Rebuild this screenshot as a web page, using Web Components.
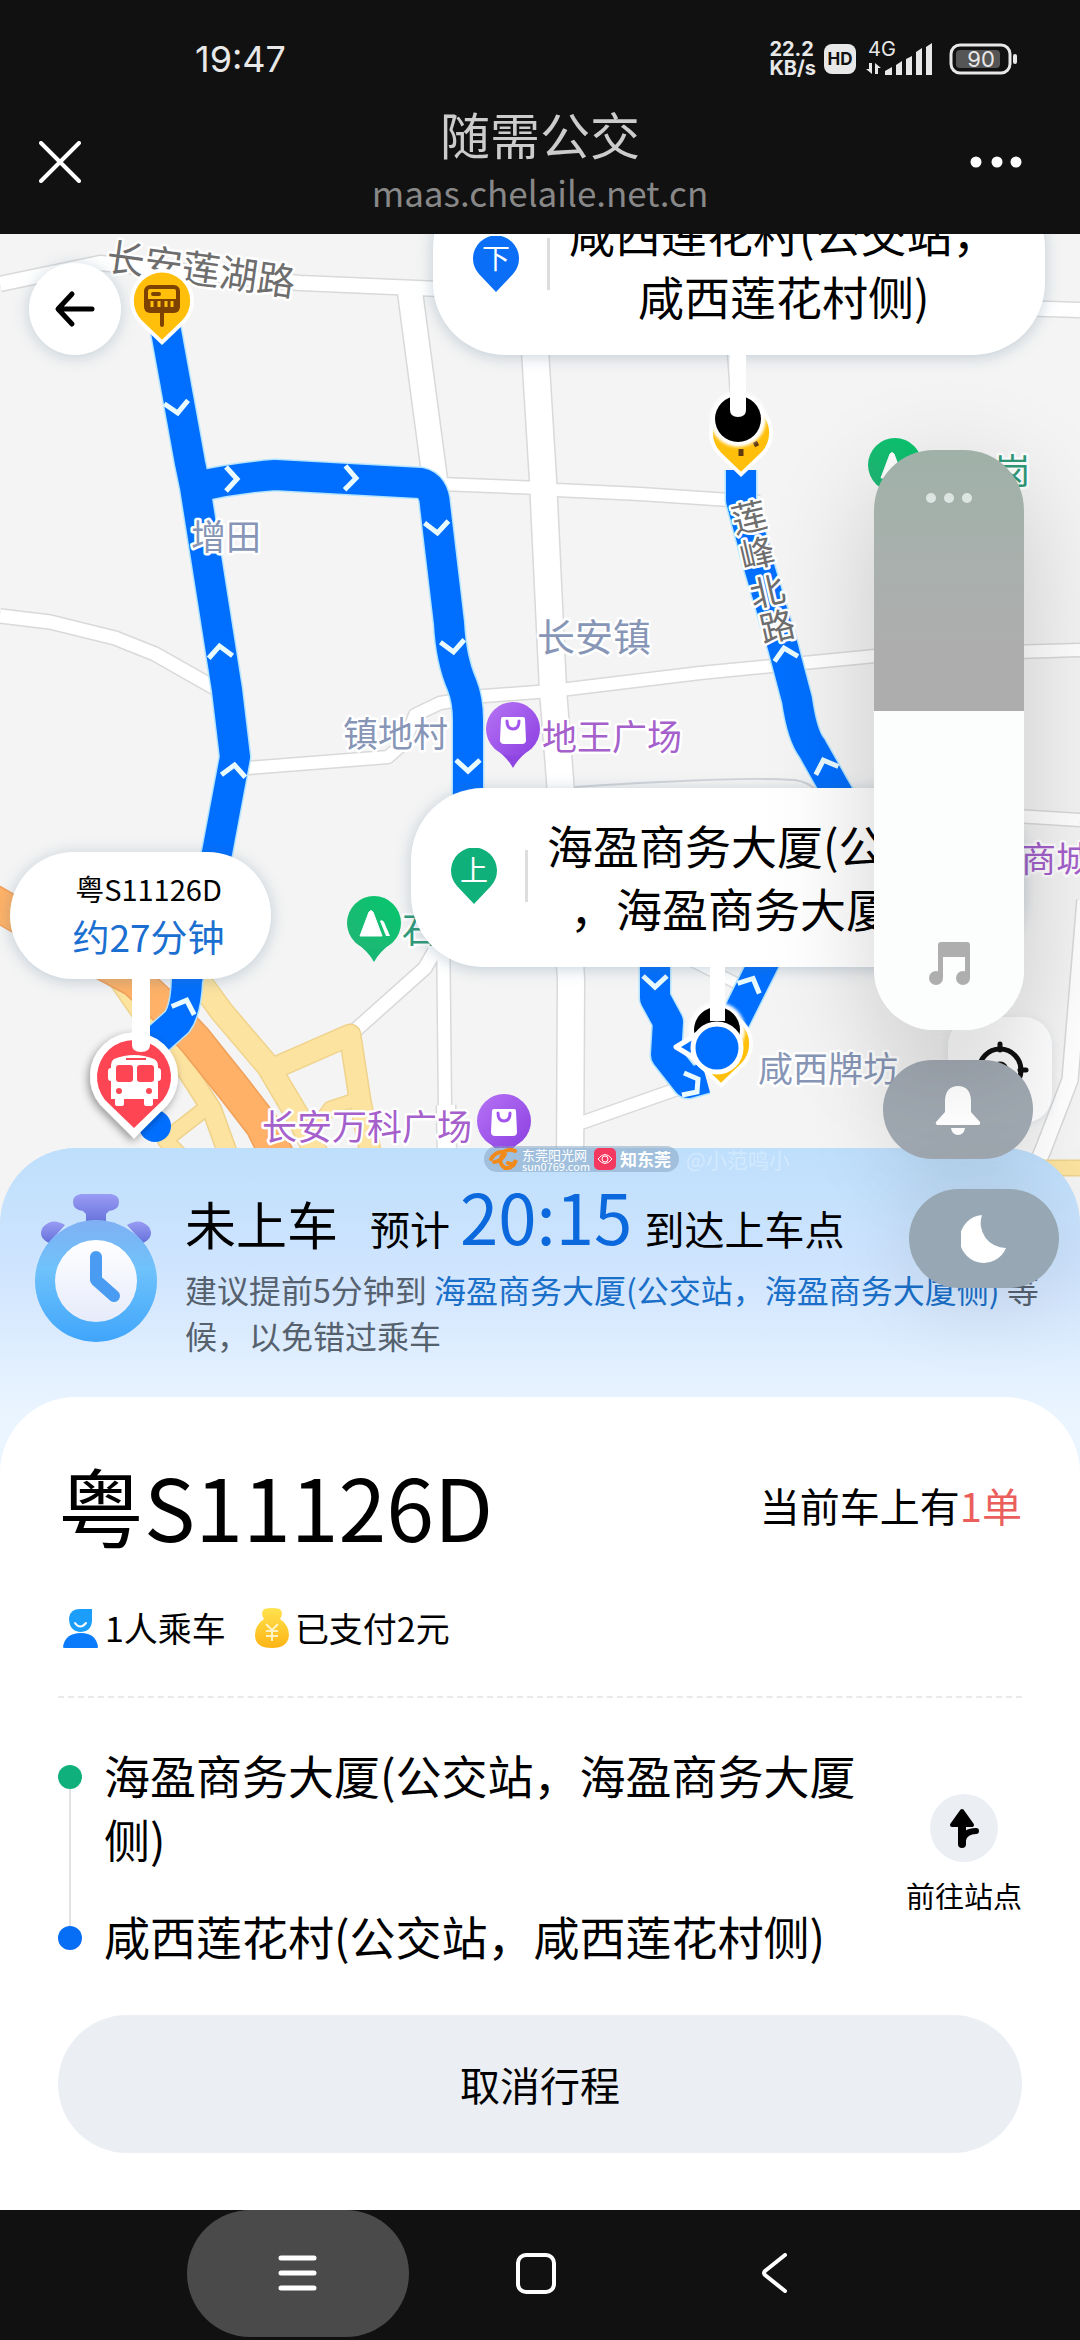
<!DOCTYPE html>
<html lang="zh-CN">
<head>
<meta charset="utf-8">
<meta name="viewport" content="width=device-width, initial-scale=1">
<title>随需公交</title>
<style>
  html, body { margin: 0; }
  body {
    position: relative;
    min-height: 100vh;
    display: flex;
    flex-direction: column;
    background: #111;
    color: #000;
    font-family: "Noto Sans CJK SC", "Noto Sans", sans-serif;
    overflow-x: hidden;
  }
  route-map { flex: 1; }
</style>
</head>
<body>
  <status-bar time="19:47" battery="90"></status-bar>
  <title-bar>
    <span slot="title">随需公交</span>
    <span slot="host">maas.chelaile.net.cn</span>
  </title-bar>
  <route-map>
    <stop-callout kind="off" style="left: 433px; top: -58px">咸西莲花村(公交站，<br>咸西莲花村侧)</stop-callout>
    <stop-callout kind="on" style="left: 411px; top: 554px">海盈商务大厦(公交站<br>，海盈商务大厦侧)</stop-callout>
    <bus-callout style="left: 10px; top: 618px">
      <span slot="plate">粤S11126D</span>
      <span slot="eta">约27分钟</span>
    </bus-callout>
  </route-map>
  <trip-sheet>
    <trip-status slot="status"></trip-status>
    <trip-detail slot="detail" plate="粤S11126D"></trip-detail>
  </trip-sheet>
  <nav-bar></nav-bar>
  <volume-panel></volume-panel>

<script>
function attach(el, html) {
  el.attachShadow({ mode: "open" }).innerHTML = html;
}

const BUTTON_RESET = `
  button {
    margin: 0;
    padding: 0;
    border: 0;
    background: none;
    color: inherit;
    font: inherit;
    cursor: pointer;
  }
  svg { display: block; }
`;

class StatusBar extends HTMLElement {
  constructor() {
    super();
    attach(this, `
      <style>
        :host {
          display: flex;
          justify-content: space-between;
          align-items: center;
          height: 38px;
          padding: 40px 62px 0 195px;
          background: #111;
          color: #e8e8e8;
          font-family: Inter, "Noto Sans CJK SC", sans-serif;
        }
        .time { font-size: 36px; line-height: 38px; }
        .right { display: flex; align-items: center; gap: 8px; }
        .speed { font-size: 20px; line-height: 19px; font-weight: 700; }
        .hd {
          width: 32px;
          border-radius: 8px;
          background: #e8e8e8;
          color: #111;
          font-size: 17px;
          line-height: 30px;
          font-weight: 700;
          text-align: center;
        }
        svg { display: block; }
        .signal text { font-size: 20px; }
        .battery text { font-size: 22px; }
      </style>
      <span class="time">${this.getAttribute("time")}</span>
      <div class="right">
        <div class="speed">22.2<br>KB/s</div>
        <div class="hd">HD</div>
        <svg class="signal" width="76" height="38" fill="#e8e8e8">
          <text x="4" y="16">4G</text>
          <path d="M8 23v11l-6-5h3v-6zM11 34V23l6 5h-3v6z"/>
          <path d="M21 35v-4l7-4v8zM32 35V25l6-4v14zM42 35V19l6-3v19zM52 35V12l6-4v27zM62 35V7l6-4v32z"/>
        </svg>
        <svg class="battery" width="70" height="32">
          <rect x="3" y="2" width="59" height="28" rx="9" fill="none" stroke="#e8e8e8" stroke-width="3"/>
          <rect x="8" y="7" width="44" height="18" rx="4" fill="#555"/>
          <rect x="65" y="11" width="4" height="10" rx="2" fill="#e8e8e8"/>
          <text x="33" y="24" text-anchor="middle" fill="#e8e8e8">${this.getAttribute("battery")}</text>
        </svg>
      </div>
    `);
  }
}

class TitleBar extends HTMLElement {
  constructor() {
    super();
    attach(this, `
      <style>
        ${BUTTON_RESET}
        :host {
          display: grid;
          grid-template-columns: 42px 1fr 54px;
          align-items: center;
          height: 144px;
          padding: 12px 58px 0 39px;
          background: #111;
          color: #fff;
        }
        .center { text-align: center; padding: 0 0 8px 31px; }
        .title { font-size: 50px; line-height: 68px; color: #ccc; }
        .host { font-size: 35px; line-height: 50px; color: #888; }
      </style>
      <button aria-label="关闭">
        <svg width="42" height="42" stroke="#fff" stroke-width="4" stroke-linecap="round"><path d="M2 2l38 38M40 2L2 40"/></svg>
      </button>
      <div class="center">
        <div class="title"><slot name="title"></slot></div>
        <div class="host"><slot name="host"></slot></div>
      </div>
      <button aria-label="更多">
        <svg width="54" height="14" fill="#fff"><circle cx="8" cy="7" r="5.5"/><circle cx="29" cy="7" r="5.5"/><circle cx="48" cy="7" r="5.5"/></svg>
      </button>
    `);
  }
}

// [x, y, heading]; heading 0 points down
const ARROWS = [
  [177, 408, -8], [232, 479, -90], [351, 478, -88], [437, 528, -5], [453, 647, -6],
  [468, 766, 0], [220, 651, 174], [234, 770, 186], [185, 1005, 200], [785, 653, 168],
  [825, 765, 160], [655, 982, 0], [751, 983, 205],
];

const ROUTE = [
  "M164 320L190 463L195 487L207 563L227 690L235 757L217 853L187 980Q186 1010 177 1022L140 1055",
  "M195 487Q235 478 275 475L420 483Q434 486 435 505L449 623Q451 660 462 685Q468 700 468 720V820",
  "M741 470V500L760 570L783 647L797 700Q802 735 812 748L834 787L900 900",
  "M655 940V998L668 1022L666 1055L688 1083L706 1078M765 960L715 1060",
];

const ROADS = [
  [14, "M0 284L100 263L300 283L440 289L1080 310"],
  [24, "M410 292L435 480"],
  [26, "M530 234L535 350L543 480L553 690L560 780L571 980L570 1170"],
  [12, "M440 484L540 488L556 490L640 494L760 502"],
  [12, "M560 690L700 673L875 656L1080 650"],
  [13, "M0 616L50 622L115 638L155 654L215 688"],
  [12, "M235 769L388 757L405 742L415 715L440 703L484 696L550 691"],
  [13, "M350 1035L425 968L438 945L440 920"],
  [12, "M443 920L445 1110"],
  [18, "M446 1105L447 1160"],
  [12, "M575 1125L680 1088"],
  [14, "M735 352L739 410"],
  [15, "M1085 900L1070 1080L1043 1150L1030 1180"],
  [12, "M1000 815L1080 820"],
  [10, "M690 960L740 985"],
];

const YELLOW_ROADS = [
  [22, "M195 975L222 1012L268 1066L300 1120L322 1165"],
  [18, "M115 975L150 1025L180 1060L212 1110L232 1165"],
  [20, "M270 1070L350 1035L360 1100L373 1165"],
  [12, "M360 1098L330 1108L318 1125"],
  [14, "M210 1105L165 1140L190 1165"],
  [14, "M1040 1168L1080 1168"],
];

function roads(list, edge, fill) {
  const draw = (grow, color) => list
    .map(([w, d]) => `<path d="${d}" stroke="${color}" stroke-width="${w + grow}"/>`)
    .join("");
  return `<g fill="none" stroke-linejoin="round">${draw(3, edge)}${draw(0, fill)}</g>`;
}

class RouteMap extends HTMLElement {
  constructor() {
    super();
    const arrows = ARROWS
      .map(([x, y, a]) => `<path d="M-12 -6L0 5L12 -6" transform="translate(${x} ${y}) rotate(${a})"/>`)
      .join("");

    attach(this, `
      <style>
        ${BUTTON_RESET}
        :host {
          display: block;
          position: relative;
          overflow: hidden;
          min-height: 900px;
          margin-bottom: -80px;
          background: #f4f4f4;
        }
        .layer {
          position: absolute;
          inset: 0;
          width: 100%;
          height: 100%;
        }
        .pins { pointer-events: none; }
        .label text {
          paint-order: stroke;
          stroke: #fff;
          stroke-width: 5px;
          stroke-linejoin: round;
          font-size: 35px;
        }
        .label .town { font-size: 38px; }
        .round {
          position: absolute;
          left: 29px;
          top: 29px;
          width: 92px;
          height: 92px;
          border-radius: 50%;
          background: #fff;
          box-shadow: 0 2px 16px rgba(70, 110, 140, 0.28);
          display: grid;
          place-items: center;
        }
        .locate {
          position: absolute;
          right: 28px;
          top: 783px;
          width: 104px;
          height: 106px;
          border-radius: 28px;
          background: #fff;
          box-shadow: 0 2px 10px rgba(70, 110, 140, 0.12);
          display: grid;
          place-items: center;
        }
      </style>

      <svg class="layer" viewBox="0 234 1080 994" preserveAspectRatio="xMidYMin slice">
        <defs>
          <linearGradient id="violet" x1="0" y1="0" x2="1" y2="1">
            <stop offset="0" stop-color="#b673f5"/><stop offset="1" stop-color="#8b3fe0"/>
          </linearGradient>
          <linearGradient id="green" x1="1" y1="0" x2="0" y2="1">
            <stop offset="0" stop-color="#05c66b"/><stop offset="1" stop-color="#22b577"/>
          </linearGradient>
          <g id="mall">
            <path d="M-19 19Q-6 28 0 39Q6 28 19 19z" fill="#8f45e2"/>
            <circle r="27" fill="url(#violet)"/>
            <path d="M-10 -12H10Q12 -12 12 -10L13 11Q13 15 9 15H-9Q-13 15 -13 11L-12 -10Q-12 -12 -10 -12z" fill="#fff"/>
            <path d="M-6 -8Q-6 0 0 0Q6 0 6 -8" fill="none" stroke="#a355ee" stroke-width="3" stroke-linecap="round"/>
          </g>
          <g id="park">
            <path d="M-19 19Q-6 28 0 39Q6 28 19 19z" fill="#14b873"/>
            <circle r="27" fill="url(#green)"/>
            <path d="M-14 13L-5 -11Q-3 -14 -1 -11L8 13z" fill="#fff" stroke="#fff" stroke-linejoin="round"/>
            <path d="M6 -2Q8 -4 10 -1L16 13H12z" fill="#fff"/>
          </g>
          <g id="route" fill="none" stroke-linejoin="round">${ROUTE.map((d) => `<path d="${d}"/>`).join("")}</g>
        </defs>

        ${roads(ROADS, "#d9d9d9", "#fff")}
        <path d="M575 787Q620 784 660 782Q760 777 795 780Q808 782 816 790" fill="none" stroke="#d0d3d8" stroke-width="2"/>
        ${roads(YELLOW_ROADS, "#efd28b", "#fde3a0")}
        ${roads([[32, "M-10 900L60 940L135 980L165 1008L195 1040L235 1090L262 1125L282 1165"]], "#f0a05a", "#ffb267")}

        <use href="#route" stroke="#b5e4ff" stroke-width="33"/>
        <use href="#route" stroke="#006fff" stroke-width="30"/>
        <g fill="none" stroke="#e9fbff" stroke-width="5">${arrows}
          <path d="M684 1073L698 1079L697 1092L682 1095"/>
        </g>
        <circle cx="155" cy="1126" r="16" fill="#006fff"/>

        <use href="#mall" x="513" y="729"/>
        <use href="#mall" x="504" y="1121"/>
        <use href="#park" x="374" y="923"/>
        <use href="#park" x="895" y="465"/>

        <g class="label">
          <g fill="#6e6e6e">
            <text class="town" transform="translate(105 270) rotate(8)">长安莲湖路</text>
            <text rotate="-13"><tspan x="735" y="534">莲</tspan><tspan x="743" y="570">峰</tspan><tspan x="753" y="608">北</tspan><tspan x="763" y="643">路</tspan></text>
          </g>
          <g fill="#8796b6">
            <text x="191" y="550">增田</text>
            <text class="town" x="537" y="651">长安镇</text>
            <text x="343" y="747">镇地村</text>
            <text x="758" y="1082">咸西牌坊</text>
          </g>
          <g fill="#a560cc">
            <text x="542" y="750">地王广场</text>
            <text x="262" y="1140">长安万科广场</text>
            <text x="1021" y="872">商城</text>
          </g>
          <g fill="#2f9a78">
            <text x="402" y="943">石</text>
            <text x="995" y="484">岗</text>
          </g>
        </g>
      </svg>

      <button class="locate" aria-label="定位">
        <svg width="58" height="58" fill="none" stroke="#111" stroke-width="5" stroke-linecap="round">
          <circle cx="29" cy="29" r="21"/><circle cx="29" cy="29" r="6" fill="#111"/>
          <path d="M29 3v6M29 49v6M3 29h6M49 29h6"/>
        </svg>
      </button>

      <slot></slot>

      <svg class="layer pins" viewBox="0 234 1080 994" preserveAspectRatio="xMidYMin slice">
        <defs>
          <filter id="soft" x="-30%" y="-30%" width="160%" height="160%"><feDropShadow dx="-2" dy="3" stdDeviation="4" flood-opacity="0.4"/></filter>
          <filter id="halo" x="-30%" y="-30%" width="160%" height="160%"><feGaussianBlur stdDeviation="1.5"/></filter>
          <path id="drop" d="M0 44L-23 22A32 32 0 1 1 23 22z"/>
          <g id="stop">
            <use href="#drop" fill="#fff"/>
            <use href="#drop" fill="#ffbf0a" transform="scale(0.88)"/>
          </g>
        </defs>

        <g transform="translate(162 301)">
          <use href="#stop"/>
          <rect x="-16" y="-14" width="32" height="24" rx="4" fill="none" stroke="#7d4100" stroke-width="4"/>
          <path d="M-17 -2H17V8Q17 11 14 11H-14Q-17 11 -17 8z" fill="#7d4100"/>
          <path d="M-9 -7h6M0 10v14" stroke="#7d4100" stroke-width="4" stroke-linecap="round"/>
          <path d="M-10 0v6M-3 0v6M4 0v6M10 0v6" stroke="#ffbf0a" stroke-width="3"/>
        </g>

        <g transform="translate(741 433)">
          <use href="#stop"/>
          <path d="M0 16v7M13 12l4 -2" stroke="#5f3a10" stroke-width="5"/>
          <circle cx="-3" cy="-14" r="28" fill="#fff" filter="url(#halo)"/>
          <circle cx="-3" cy="-14" r="23"/>
        </g>
        <path d="M730 355V410Q730 417 738 417Q746 417 746 410V355z" fill="#fff"/>

        <g transform="translate(721 1044)">
          <use href="#stop"/>
          <circle cx="-4" cy="-14" r="28" fill="#fff" filter="url(#halo)"/>
          <circle cx="-4" cy="-14" r="23"/>
          <path d="M-11 -78h15v55h-15z" fill="#fff"/>
          <path d="M-20 -12L-45 3L-20 18" fill="#006fff" stroke="#fff" stroke-width="5" stroke-linejoin="round"/>
          <circle cx="-4" cy="4" r="24" fill="#006fff" stroke="#fff" stroke-width="5"/>
        </g>

        <g transform="translate(134 1078)">
          <path d="M0 59L-33 26A43 43 0 1 1 33 26z" fill="#fff" stroke="#fff" stroke-width="2" filter="url(#soft)"/>
          <path d="M0 50L-29 22A37 37 0 1 1 29 22z" fill="#fd4553"/>
          <path d="M-20 -19Q0 -27 20 -19Q24 -17 24 -12V-10Q27 -10 27 -7V0Q27 3 24 3V21H19V26Q19 28 16 28H13Q10 28 10 26V21H-10V26Q-10 28 -13 28H-16Q-19 28 -19 26V21H-23V3Q-26 3 -26 0V-7Q-26 -10 -23 -10V-12Q-23 -17 -20 -19z" fill="#fff"/>
          <rect x="-18" y="-13" width="17" height="17" rx="3" fill="#fd4553"/>
          <rect x="3" y="-13" width="17" height="17" rx="3" fill="#fd4553"/>
          <circle cx="-15" cy="13" r="3" fill="#fd4553"/><circle cx="15" cy="13" r="3" fill="#fd4553"/>
          <path d="M-8 -19H12" stroke="#fd4553" stroke-width="2"/>
        </g>
        <path d="M132 972H150V1045Q150 1052 141 1052Q132 1052 132 1045z" fill="#fff"/>
      </svg>

      <button class="round" aria-label="返回">
        <svg width="42" height="38" fill="none" stroke="#000" stroke-width="5" stroke-linecap="round" stroke-linejoin="round"><path d="M18 4L4 19L18 34M5 19H38"/></svg>
      </button>
    `);
  }
}

class StopCallout extends HTMLElement {
  constructor() {
    super();
    const on = this.getAttribute("kind") === "on";
    const glyph = on ? "上" : "下";
    const color = on ? "#10b07b" : "#0a6ef6";
    attach(this, `
      <style>
        :host {
          position: absolute;
          display: flex;
          align-items: center;
          padding: 25px 46px 28px 40px;
          border-radius: 72px;
          background: #fff;
          box-shadow: 0 2px 16px rgba(70, 110, 140, 0.3);
          white-space: nowrap;
          font-size: 46px;
          line-height: 63px;
          text-align: center;
        }
        svg { display: block; }
        svg text { font-size: 28px; }
        .rule { width: 3px; height: 52px; margin: 0 19px 0 28px; background: #ddd; }
      </style>
      <svg width="46" height="56">
        <path d="M23 56L6 38A23 23 0 1 1 40 38z" fill="${color}"/>
        <text x="23" y="33" text-anchor="middle" fill="#fff">${glyph}</text>
      </svg>
      <div class="rule"></div>
      <div><slot></slot></div>
    `);
  }
}

class BusCallout extends HTMLElement {
  constructor() {
    super();
    attach(this, `
      <style>
        :host {
          position: absolute;
          box-sizing: border-box;
          width: 261px;
          height: 127px;
          padding: 12px 0 0 16px;
          border-radius: 64px;
          background: #fff;
          box-shadow: 0 2px 16px rgba(70, 110, 140, 0.3);
          text-align: center;
        }
        .plate { font-size: 29px; line-height: 48px; }
        .eta { font-size: 37px; line-height: 48px; color: #1a6fd0; }
      </style>
      <div class="plate"><slot name="plate"></slot></div>
      <div class="eta"><slot name="eta"></slot></div>
    `);
  }
}

class TripSheet extends HTMLElement {
  constructor() {
    super();
    attach(this, `
      <style>
        :host {
          display: block;
          position: relative;
          border-radius: 76px 76px 0 0;
          background: linear-gradient(#bedffc 0, #cfe4fe 120px, #ebf5ff 270px, #ebf5ff 340px, #fff 340px);
        }
        .mark {
          position: absolute;
          left: 484px;
          top: -2px;
          display: flex;
          align-items: center;
          color: #fff;
          white-space: nowrap;
        }
        .pill {
          display: flex;
          align-items: center;
          gap: 4px;
          height: 26px;
          padding: 0 8px 0 4px;
          border-radius: 13px;
          background: rgba(130, 160, 190, 0.5);
        }
        .site { font-size: 13px; line-height: 13px; }
        .site small { display: block; font-size: 11px; line-height: 10px; }
        .app { font-size: 17px; line-height: 22px; font-weight: 700; }
        .user { font-size: 21px; line-height: 26px; margin-left: 7px; opacity: 0.3; }
      </style>
      <slot name="status"></slot>
      <slot name="detail"></slot>
      <div class="mark">
        <div class="pill">
          <svg width="30" height="24" fill="none" stroke="#f08a1d" stroke-width="4" stroke-linecap="round">
            <path d="M3 12Q8 4 15 5Q22 1 27 4M6 15Q14 14 17 7M15 7Q9 16 17 21Q25 22 28 13Q26 19 20 16"/>
          </svg>
          <div class="site">东莞阳光网<small>sun0769.com</small></div>
          <svg width="22" height="22" fill="none" stroke="#fff">
            <rect width="22" height="22" rx="5" fill="#f5385f" stroke="none"/>
            <path d="M4 11Q11 2 18 11Q11 20 4 11z"/><circle cx="11" cy="11" r="3"/>
          </svg>
          <div class="app">知东莞</div>
        </div>
        <div class="user">@小范鸣小</div>
      </div>
    `);
  }
}

class TripStatus extends HTMLElement {
  constructor() {
    super();
    attach(this, `
      <style>
        :host {
          display: flex;
          gap: 27px;
          padding: 27px 34px 39px;
        }
        svg { flex: none; display: block; margin-top: 17px; }
        .head {
          display: flex;
          align-items: baseline;
          font-size: 40px;
          line-height: 40px;
          white-space: nowrap;
        }
        .state { font-size: 51px; margin-right: 32px; }
        .time { font-size: 69px; line-height: 80px; color: #0b69dd; margin: 0 12px 0 10px; }
        p {
          margin: 11px -8px 0 0;
          font-size: 32px;
          line-height: 46px;
          color: #56616e;
        }
        b { font-weight: 400; color: #1a6fc8; }
      </style>
      <svg width="124" height="152" viewBox="0 0 124 152">
        <defs>
          <linearGradient id="ring" x1="0" y1="0" x2="0" y2="1"><stop offset="0" stop-color="#7fb0f3"/><stop offset="0.4" stop-color="#6fc2fb"/><stop offset="1" stop-color="#3fa5fb"/></linearGradient>
          <linearGradient id="knob" x1="0" y1="0" x2="0" y2="1"><stop offset="0" stop-color="#9a9cf5"/><stop offset="1" stop-color="#6470d8"/></linearGradient>
          <linearGradient id="face" x1="0" y1="0" x2="0" y2="1"><stop offset="0" stop-color="#fff"/><stop offset="1" stop-color="#e6ebfb"/></linearGradient>
        </defs>
        <path d="M47 2H77Q85 3 85 10Q85 18 75 19L72 22V32H52V22L49 19Q39 18 39 10Q39 3 47 2z" fill="url(#knob)"/>
        <path d="M15 51Q3 45 9 35Q18 25 31 33zM109 51Q121 45 115 35Q106 25 93 33z" fill="url(#knob)"/>
        <circle cx="62" cy="89" r="61" fill="url(#ring)"/>
        <circle cx="62" cy="89" r="41" fill="url(#face)"/>
        <path d="M62 65V88L80 104" fill="none" stroke="#4a9cf2" stroke-width="12" stroke-linecap="round" stroke-linejoin="round"/>
      </svg>
      <div>
        <div class="head"><span class="state">未上车</span><span>预计</span><span class="time">20:15</span><span>到达上车点</span></div>
        <p>建议提前5分钟到 <b>海盈商务大厦(公交站，海盈商务大厦侧)</b> 等候，以免错过乘车</p>
      </div>
    `);
  }
}

class TripDetail extends HTMLElement {
  constructor() {
    super();
    attach(this, `
      <style>
        ${BUTTON_RESET}
        :host {
          display: block;
          padding: 46px 58px 57px;
          border-radius: 76px 76px 0 0;
          background: #fff;
        }
        .top { display: flex; justify-content: space-between; align-items: center; font-size: 40px; }
        h1 { margin: 0; font-size: 86px; line-height: 124px; font-weight: 400; }
        em { font-style: normal; color: #ea5f5c; }
        .chips {
          display: flex;
          align-items: center;
          gap: 28px;
          margin-top: 36px;
          padding: 0 0 43px 4px;
          border-bottom: 2px dashed #e9e9e9;
          font-size: 34px;
          line-height: 50px;
        }
        .chips span { display: flex; align-items: center; gap: 5px; }
        .route {
          display: flex;
          gap: 22px;
          align-items: center;
          padding: 44px 0 48px;
        }
        ol { flex: 1; margin: 0; padding: 0; list-style: none; font-size: 46px; line-height: 64px; }
        li { position: relative; padding-left: 46px; }
        li::before {
          content: "";
          position: absolute;
          left: 0;
          top: 23px;
          width: 24px;
          height: 24px;
          border-radius: 50%;
          background: var(--dot);
        }
        li + li { margin-top: 33px; }
        li:first-child::after {
          content: "";
          position: absolute;
          left: 11px;
          top: 47px;
          bottom: -56px;
          width: 2px;
          background: #e2e2e2;
        }
        .go { width: 116px; font-size: 29px; line-height: 42px; white-space: nowrap; }
        .go svg { margin: 0 auto 12px; }
        .cancel {
          width: 100%;
          height: 138px;
          border-radius: 69px;
          background: #ebeef3;
          font-size: 40px;
        }
      </style>
      <div class="top">
        <h1>${this.getAttribute("plate")}</h1>
        <div>当前车上有<em>1单</em></div>
      </div>
      <div class="chips">
        <span>
          <svg width="38" height="40" viewBox="0 0 38 40">
            <path d="M7 10Q8 1 18 1H30V13Q29 24 18 24Q7 23 7 10z" fill="#1a9dfb"/>
            <path d="M13 15Q18 22 24 15" fill="none" stroke="#fff" stroke-width="2" stroke-linecap="round"/>
            <path d="M1 39Q3 25 19 25Q34 25 36 39Q36 40 35 40H3Q1 40 1 39z" fill="#0a7bfa"/>
          </svg>1人乘车</span>
        <span>
          <svg width="36" height="40" viewBox="0 0 36 40">
            <defs><linearGradient id="gold" x1="0" y1="0" x2="0" y2="1"><stop offset="0" stop-color="#ffe34f"/><stop offset="1" stop-color="#fdb414"/></linearGradient></defs>
            <path d="M10 1Q18 -1 26 1Q30 5 26 11Q35 17 35 27Q34 40 18 40Q1 40 1 27Q1 17 10 11Q6 5 10 1z" fill="url(#gold)"/>
            <path d="M12 16L18 22L24 16M18 22V33M12 23H24M12 28H24" fill="none" stroke="#fff3c4" stroke-width="2"/>
          </svg>已支付2元</span>
      </div>
      <div class="route">
        <ol>
          <li style="--dot: #0fb07c">海盈商务大厦(公交站，海盈商务大厦侧)</li>
          <li style="--dot: #066df5">咸西莲花村(公交站，咸西莲花村侧)</li>
        </ol>
        <button class="go">
          <svg width="68" height="68">
            <circle cx="34" cy="34" r="34" fill="#ebeef3"/>
            <path d="M32 17L42 31H22z" stroke="#000" stroke-width="4" stroke-linejoin="round"/>
            <path d="M32 28V50" fill="none" stroke="#000" stroke-width="8" stroke-linecap="round"/>
            <path d="M33 46Q35 37 46 37" fill="none" stroke="#000" stroke-width="6" stroke-linecap="round"/>
          </svg>前往站点</button>
      </div>
      <button class="cancel">取消行程</button>
    `);
  }
}

class NavBar extends HTMLElement {
  constructor() {
    super();
    attach(this, `
      <style>
        ${BUTTON_RESET}
        :host {
          position: relative;
          display: flex;
          justify-content: center;
          gap: 16px;
          height: 130px;
          padding-right: 8px;
          overflow: hidden;
          background: #111;
        }
        button { width: 222px; height: 127px; border-radius: 64px; display: grid; place-items: center; }
        button.active { background: #4a4a4a; }
      </style>
      <button class="active" aria-label="任务">
        <svg width="40" height="38" stroke="#fff" stroke-width="5" stroke-linecap="round"><path d="M3 3H36M3 18H36M3 33H36"/></svg>
      </button>
      <button aria-label="主页">
        <svg width="42" height="42" fill="none" stroke="#fff" stroke-width="4"><rect x="3" y="2" width="36" height="37" rx="8"/></svg>
      </button>
      <button aria-label="返回">
        <svg width="28" height="42" fill="none" stroke="#fff" stroke-width="4" stroke-linecap="round" stroke-linejoin="round"><path d="M25 2L5 18Q3 20 5 22L25 38"/></svg>
      </button>
    `);
  }
}

class VolumePanel extends HTMLElement {
  constructor() {
    super();
    attach(this, `
      <style>
        ${BUTTON_RESET}
        :host {
          position: absolute;
          right: 21px;
          top: 450px;
          display: flex;
          flex-direction: column;
          align-items: flex-end;
          gap: 30px;
        }
        .level {
          position: relative;
          margin-right: 35px;
          width: 150px;
          height: 580px;
          border-radius: 60px;
          box-shadow: 0 30px 110px rgba(0, 0, 0, 0.18);
        }
        input {
          appearance: none;
          writing-mode: vertical-lr;
          direction: rtl;
          display: block;
          margin: 0;
          width: 100%;
          height: 100%;
          border-radius: 60px;
          background: linear-gradient(#9fb1a8 0, #a9b0ad 20%, #adadad 34%, #adadad 45%, #fcfdfd 45%);
        }
        input::-webkit-slider-thumb { appearance: none; width: 0; height: 0; }
        .dots, .note { position: absolute; left: 50%; transform: translateX(-50%); }
        .dots { top: 40px; }
        .note { bottom: 44px; pointer-events: none; }
        .pill {
          width: 150px;
          height: 99px;
          border-radius: 50px;
          display: grid;
          place-items: center;
          background: #9fa7b0;
          box-shadow: 0 10px 90px rgba(0, 0, 0, 0.12);
        }
        .bell { margin-right: 26px; }
        .moon { background: #97a8b4; }
      </style>
      <div class="level">
        <input type="range" min="0" max="100" value="55" aria-label="媒体音量">
        <button class="dots" aria-label="更多音量">
          <svg width="48" height="16" fill="#dde5e2"><circle cx="6" cy="8" r="5"/><circle cx="24" cy="8" r="5"/><circle cx="42" cy="8" r="5"/></svg>
        </button>
        <svg class="note" width="42" height="44" fill="#aeaeae">
          <path d="M10 3Q10 0 13 0H39Q42 0 42 3V36H37V15H15V36H10z"/>
          <circle cx="8" cy="36" r="7"/><circle cx="35" cy="36" r="7"/>
        </svg>
      </div>
      <button class="pill bell" aria-label="响铃">
        <svg width="46" height="50" fill="#fff">
          <path d="M10 27V15Q11 1 23 1Q35 1 36 15V27L45 37Q46 40 43 40H3Q0 40 1 37zM16 43H30Q29 50 23 50Q17 50 16 43z"/>
        </svg>
      </button>
      <button class="pill moon" aria-label="勿扰">
        <svg width="46" height="48" fill="#fff"><path d="M21 0A24 24 0 1 0 45 33A25 25 0 0 1 21 0z"/></svg>
      </button>
    `);
  }
}

customElements.define("status-bar", StatusBar);
customElements.define("title-bar", TitleBar);
customElements.define("stop-callout", StopCallout);
customElements.define("bus-callout", BusCallout);
customElements.define("route-map", RouteMap);
customElements.define("trip-sheet", TripSheet);
customElements.define("trip-status", TripStatus);
customElements.define("trip-detail", TripDetail);
customElements.define("nav-bar", NavBar);
customElements.define("volume-panel", VolumePanel);
</script>
</body>
</html>
